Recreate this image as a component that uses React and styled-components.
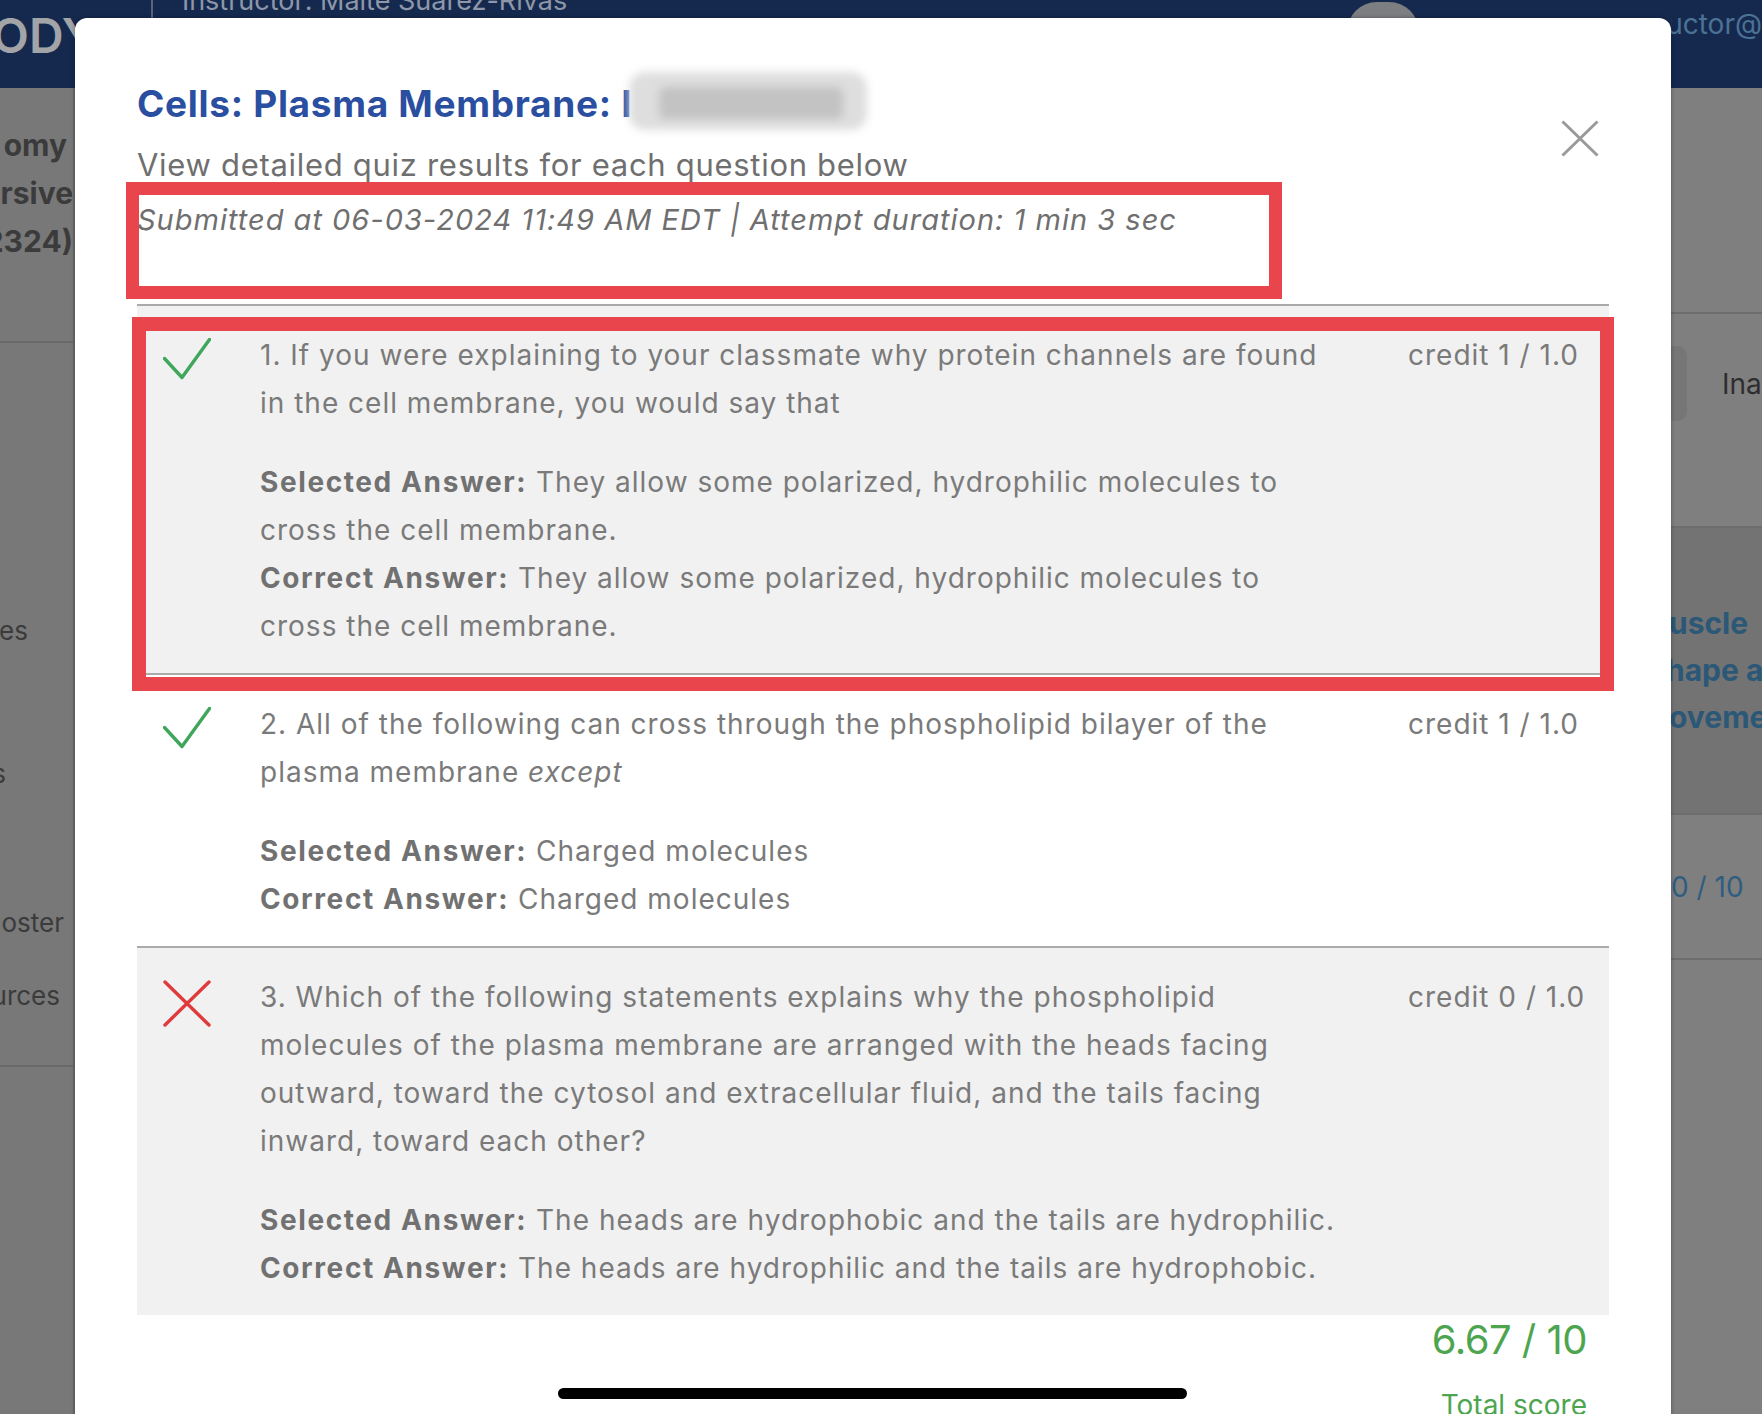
import React from "react";
import styled, { createGlobalStyle } from "styled-components";

const GlobalStyle = createGlobalStyle`
  html, body {
    margin: 0;
    padding: 0;
  }
  body {
    font-family: Inter, "Noto Sans", sans-serif;
    overflow: hidden;
  }
`;

const Page = styled.div`
  position: relative;
  width: 1762px;
  height: 1414px;
  overflow: hidden;
  background: #7f7f7f;
  display: flex;
  flex-direction: column;
`;

/* ---------- dimmed page behind the modal ---------- */

const TopBar = styled.header`
  flex: none;
  height: 88px;
  background: #15294f;
  display: flex;
  align-items: flex-start;
  overflow: hidden;
  white-space: nowrap;
`;

const Brand = styled.div`
  margin: 12px 0 0 -8px;
  font-size: 48px;
  font-weight: 600;
  line-height: 1;
  color: #a2a4a8;
`;

const BarDivider = styled.div`
  width: 2px;
  height: 52px;
  margin-left: 55px;
  background: #56647f;
`;

const Instructor = styled.div`
  margin: -17px 0 0 29px;
  font-size: 27px;
  line-height: 36px;
  color: #8e97a8;
`;

const Preview = styled.div`
  margin: 14px 0 0 569px;
  font-size: 26px;
  color: #7e8aa0;
`;

const Toggle = styled.div`
  width: 72px;
  height: 60px;
  margin: 2px 0 0 10px;
  border-radius: 30px;
  background: #7c7e82;
`;

const Email = styled.div`
  margin: 6px 0 0 auto;
  width: 91px;
  display: flex;
  justify-content: flex-end;
  overflow: hidden;
  font-size: 28px;
  line-height: 36px;
  color: #4b7294;
`;

const Content = styled.div`
  flex: 1;
  display: flex;
`;

const Sidebar = styled.aside`
  width: 73px;
  flex: none;
  background: #787878;
  border-right: 2px solid #6c6c6c;
  display: flex;
  flex-direction: column;
  overflow: hidden;
`;

const SideGroup = styled.div`
  display: flex;
  flex-direction: column;
  padding: ${(p) => p.$pad || "0"};
  border-bottom: ${(p) => (p.$line ? "2px solid #6a6a6a" : "none")};
`;

const SideItem = styled.div`
  display: flex;
  justify-content: flex-end;
  white-space: nowrap;
  padding-right: ${(p) => p.$end || 0}px;
  font-size: ${(p) => (p.$bold ? "30px" : "26px")};
  font-weight: ${(p) => (p.$bold ? 700 : 400)};
  line-height: 48px;
  margin-top: ${(p) => p.$gap || "0"};
  color: #3b3b3b;
`;

const Main = styled.main`
  flex: 1;
`;

const RightCol = styled.div`
  width: 91px;
  flex: none;
  display: flex;
  flex-direction: column;
  padding-top: 224px;
  overflow: hidden;
  white-space: nowrap;
`;

const RightRow = styled.div`
  box-sizing: border-box;
  height: ${(p) => p.$h}px;
  padding-top: ${(p) => p.$pad || 0}px;
  border-top: 2px solid #6d6d6d;
  background: ${(p) => (p.$dark ? "#737373" : "transparent")};
  display: flex;
  flex-direction: column;
`;

const GhostButton = styled.div`
  display: flex;
  align-items: center;
  gap: 35px;
`;

const GhostEdge = styled.div`
  width: 16px;
  height: 75px;
  border-radius: 0 10px 10px 0;
  background: #767676;
`;

const GhostLabel = styled.span`
  font-size: 28px;
  color: #2e2e2e;
`;

const LinkLine = styled.div`
  font-size: 30px;
  font-weight: 700;
  line-height: 47px;
  color: #2c5878;
  text-indent: ${(p) => p.$indent || "0"};
`;

const Points = styled.div`
  font-size: 28px;
  line-height: 36px;
  color: #2f5d80;
`;

/* ---------- modal ---------- */

const Modal = styled.section`
  position: absolute;
  left: 75px;
  top: 18px;
  width: 1596px;
  height: 1440px;
  box-sizing: border-box;
  padding: 0 62px;
  background: #fff;
  border-radius: 12px 12px 0 0;
  box-shadow: 0 0 4px rgba(0, 0, 0, 0.35);
`;

const ModalHead = styled.div`
  display: grid;
  grid-template-columns: 1fr auto;
  padding: 63px 0 64px;
  border-bottom: 2px solid #a9a9a9;
`;

const HeadText = styled.div`
  display: flex;
  flex-direction: column;
  gap: 15px;
`;

const Title = styled.h2`
  margin: 0;
  font-size: 37px;
  font-weight: 700;
  line-height: 45px;
  letter-spacing: 0.7px;
  color: #2a4ea0;
  white-space: nowrap;
`;

const Smudge = styled.span`
  position: relative;
  display: inline-block;
  width: 238px;
  height: 58px;
  margin: -12px 0 0 -3px;
  vertical-align: middle;
  border-radius: 16px;
  background: #dedede;
  filter: blur(4px);

  &::after {
    content: "";
    position: absolute;
    left: 30px;
    right: 24px;
    top: 15px;
    bottom: 11px;
    background: #c3c3c3;
    border-radius: 6px;
  }
`;

const Subtitle = styled.p`
  margin: 0;
  font-size: 31px;
  line-height: 40px;
  letter-spacing: 0.7px;
  color: #6f6f6f;
`;

const Submitted = styled.p`
  margin: 0;
  font-size: 29px;
  font-style: italic;
  line-height: 40px;
  letter-spacing: 1px;
  color: #6f6f6f;
`;

const CloseButton = styled.button`
  align-self: start;
  margin: 39px 10px 0 0;
  padding: 0;
  border: 0;
  background: none;
  display: flex;
`;

const QuestionList = styled.div`
  display: flex;
  flex-direction: column;
`;

const QuestionRow = styled.article`
  display: grid;
  grid-template-columns: 123px 1fr 171px;
  padding: 25px 30px 23px 0;
  background: ${(p) => (p.$shaded ? "#f1f1f1" : "#fff")};
  border-bottom: ${(p) => (p.$last ? "none" : "2px solid #ababab")};
  color: #7a7a7a;
  font-size: 28px;
  line-height: 48px;
  letter-spacing: 1px;
`;

const Mark = styled.div`
  padding: 7px 0 0 26px;
`;

const QuestionBody = styled.div`
  padding-right: 68px;
`;

const Prompt = styled.p`
  margin: 0 0 31px;
`;

const AnswerLine = styled.p`
  margin: 0;
`;

const Label = styled.strong`
  font-weight: 700;
  letter-spacing: 1.6px;
  color: #717171;
`;

const Credit = styled.div`
  white-space: nowrap;
`;

const ScoreBlock = styled.div`
  display: flex;
  flex-direction: column;
  align-items: flex-end;
  padding: 1px 22px 0 0;
  color: #4ea54f;
`;

const Score = styled.div`
  font-size: 40px;
  line-height: 48px;
  letter-spacing: -0.5px;
`;

const ScoreLabel = styled.div`
  margin-top: 23px;
  font-size: 28px;
  line-height: 36px;
`;

/* ---------- overlays ---------- */

const Callout = styled.div`
  position: absolute;
  left: ${(p) => p.$x}px;
  top: ${(p) => p.$y}px;
  width: ${(p) => p.$w}px;
  height: ${(p) => p.$h}px;
  box-sizing: border-box;
  border: ${(p) => p.$t}px solid #e8454c;
  pointer-events: none;
`;

const HomeIndicator = styled.div`
  position: absolute;
  left: 558px;
  top: 1388px;
  width: 629px;
  height: 11px;
  border-radius: 6px;
  background: #000;
`;

const CheckIcon = () => (
  <svg width="48" height="42" viewBox="0 0 48 42" fill="none">
    <path d="M1.5 20.5 L19 39.5 L46.5 1.5" stroke="#3fa65b" strokeWidth="3.4" strokeLinecap="round" strokeLinejoin="round" />
  </svg>
);

const CrossIcon = () => (
  <svg width="48" height="47" viewBox="0 0 48 47" fill="none">
    <path d="M2 2 L46 45 M46 2 L2 45" stroke="#e03b3c" strokeWidth="3.4" strokeLinecap="round" />
  </svg>
);

const CloseIcon = () => (
  <svg width="38" height="37" viewBox="0 0 38 37" fill="none">
    <path d="M1.5 1.5 L36.5 35.5 M36.5 1.5 L1.5 35.5" stroke="#9a9a9a" strokeWidth="3" />
  </svg>
);

const questions = [
  {
    id: 1,
    correct: true,
    shaded: true,
    prompt: "1. If you were explaining to your classmate why protein channels are found in the cell membrane, you would say that",
    selected: "They allow some polarized, hydrophilic molecules to cross the cell membrane.",
    answer: "They allow some polarized, hydrophilic molecules to cross the cell membrane.",
    credit: "credit 1 / 1.0",
  },
  {
    id: 2,
    correct: true,
    shaded: false,
    prompt: (
      <>
        2. All of the following can cross through the phospholipid bilayer of the plasma membrane <em>except</em>
      </>
    ),
    selected: "Charged molecules",
    answer: "Charged molecules",
    credit: "credit 1 / 1.0",
  },
  {
    id: 3,
    correct: false,
    shaded: true,
    prompt:
      "3. Which of the following statements explains why the phospholipid molecules of the plasma membrane are arranged with the heads facing outward, toward the cytosol and extracellular fluid, and the tails facing inward, toward each other?",
    selected: "The heads are hydrophobic and the tails are hydrophilic.",
    answer: "The heads are hydrophilic and the tails are hydrophobic.",
    credit: "credit 0 / 1.0",
  },
];

export default function App() {
  return (
    <>
      <GlobalStyle />
      <Page>
        <TopBar>
          <Brand>ODY</Brand>
          <BarDivider />
          <Instructor>Instructor: Maite Suarez-Rivas</Instructor>
          <Preview>Student Preview</Preview>
          <Toggle />
          <Email>instructor@</Email>
        </TopBar>

        <Content>
          <Sidebar>
            <SideGroup $pad="33px 0 76px" $line>
              <SideItem $bold $end={6}>omy</SideItem>
              <SideItem $bold>rsive</SideItem>
              <SideItem $bold>2324)</SideItem>
            </SideGroup>
            <SideGroup $pad="264px 0 45px" $line>
              <SideItem $end={45}>es</SideItem>
              <SideItem $end={67} $gap="95px">s</SideItem>
              <SideItem $end={9} $gap="101px">oster</SideItem>
              <SideItem $end={13} $gap="25px">urces</SideItem>
            </SideGroup>
          </Sidebar>

          <Main />

          <RightCol>
            <RightRow $h={214} $pad={32}>
              <GhostButton>
                <GhostEdge />
                <GhostLabel>Ina</GhostLabel>
              </GhostButton>
            </RightRow>
            <RightRow $h={287} $pad={72} $dark>
              <LinkLine $indent="-30px">Muscle</LinkLine>
              <LinkLine $indent="-5px">hape a</LinkLine>
              <LinkLine $indent="-2px">oveme</LinkLine>
            </RightRow>
            <RightRow $h={145} $pad={54}>
              <Points>0 / 10</Points>
            </RightRow>
            <RightRow $h={400} />
          </RightCol>
        </Content>

        <Modal>
          <ModalHead>
            <HeadText>
              <Title>
                Cells: Plasma Membrane: I<Smudge />
              </Title>
              <Subtitle>View detailed quiz results for each question below</Subtitle>
              <Submitted>Submitted at 06-03-2024 11:49 AM EDT | Attempt duration: 1 min 3 sec</Submitted>
            </HeadText>
            <CloseButton aria-label="Close">
              <CloseIcon />
            </CloseButton>
          </ModalHead>

          <QuestionList>
            {questions.map((q, i) => (
              <QuestionRow key={q.id} $shaded={q.shaded} $last={i === questions.length - 1}>
                <Mark>{q.correct ? <CheckIcon /> : <CrossIcon />}</Mark>
                <QuestionBody>
                  <Prompt>{q.prompt}</Prompt>
                  <AnswerLine>
                    <Label>Selected Answer:</Label> {q.selected}
                  </AnswerLine>
                  <AnswerLine>
                    <Label>Correct Answer:</Label> {q.answer}
                  </AnswerLine>
                </QuestionBody>
                <Credit>{q.credit}</Credit>
              </QuestionRow>
            ))}
          </QuestionList>

          <ScoreBlock>
            <Score>6.67 / 10</Score>
            <ScoreLabel>Total score</ScoreLabel>
          </ScoreBlock>

          <Callout $x={51} $y={164} $w={1156} $h={117} $t={13} />
          <Callout $x={57} $y={299} $w={1482} $h={374} $t={14} />
        </Modal>

        <HomeIndicator />
      </Page>
    </>
  );
}
